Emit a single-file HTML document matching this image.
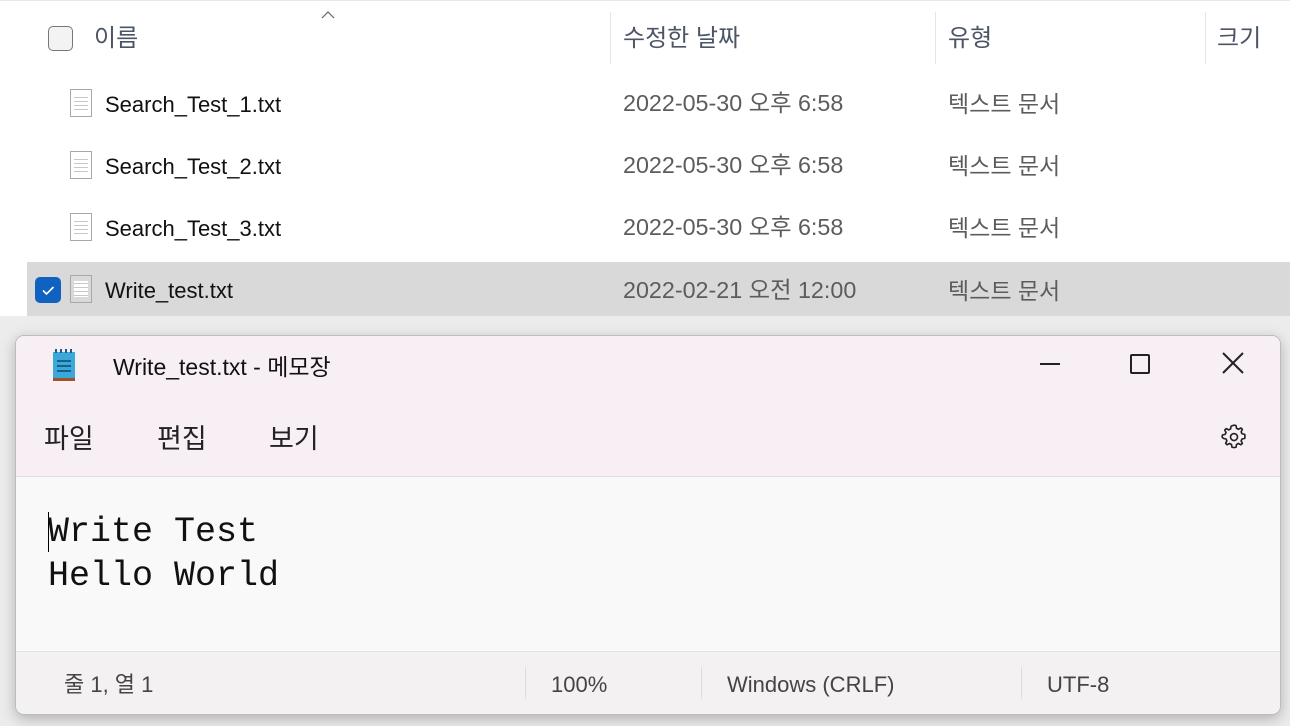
<!DOCTYPE html>
<html><head><meta charset="utf-8"><style>
*{margin:0;padding:0;box-sizing:border-box}
body{width:1290px;height:726px;overflow:hidden;background:#fff;font-family:"Liberation Sans","Noto Sans CJK KR",sans-serif;position:relative}
.a{position:absolute;white-space:nowrap;line-height:30px}
.hdr{font-size:24px;color:#4c5566;top:24px}
.name{font-size:22px;color:#111;left:105px}
.dt{font-size:23.3px;color:#5c5c5c;left:623px}
.ty{font-size:23px;color:#5c5c5c;left:948px}
.vl{position:absolute;top:12px;width:1px;height:52px;background:#e5e5e5}
.fi{position:absolute;left:70px;width:22px;height:28px;border:1px solid #a8a8a8;background:repeating-linear-gradient(#fff 0 3px,#c8c8c8 3px 4px);background-clip:content-box;padding:5px 3px}
#win{position:absolute;left:15px;top:335px;width:1266px;height:380px;border:1px solid #bdbdbd;border-radius:9px;overflow:hidden;box-shadow:0 4px 14px rgba(0,0,0,.25);background:#f9f9f9}
</style></head><body>
<div style="position:absolute;left:0;top:316px;width:1290px;height:410px;background:#ececec"></div>
<div style="position:absolute;left:0;top:0;width:1290px;height:1px;background:#e8e8e8"></div>
<svg class="a" style="left:321px;top:11px" width="14" height="8"><path d="M1 7L7 1L13 7" stroke="#666" fill="none" stroke-width="1.2"/></svg>
<div style="position:absolute;left:48px;top:26px;width:25px;height:25px;border:1.5px solid #777;border-radius:5px;background:#f3f3f3"></div>
<div class="a hdr" style="left:94px">이름</div>
<div class="vl" style="left:610px"></div>
<div class="a hdr" style="left:623px">수정한 날짜</div>
<div class="vl" style="left:935px"></div>
<div class="a hdr" style="left:948px">유형</div>
<div class="vl" style="left:1205px"></div>
<div class="a hdr" style="left:1217px">크기</div>

<div style="position:absolute;left:27px;top:262px;width:1263px;height:54px;background:#d9d9d9"></div>
<div class="fi" style="top:89px"></div><div class="a name" style="top:90px">Search_Test_1.txt</div>
<div class="a dt" style="top:88px">2022-05-30 오후 6:58</div><div class="a ty" style="top:89px">텍스트 문서</div>
<div class="fi" style="top:151px"></div><div class="a name" style="top:152px">Search_Test_2.txt</div>
<div class="a dt" style="top:150px">2022-05-30 오후 6:58</div><div class="a ty" style="top:151px">텍스트 문서</div>
<div class="fi" style="top:213px"></div><div class="a name" style="top:214px">Search_Test_3.txt</div>
<div class="a dt" style="top:212px">2022-05-30 오후 6:58</div><div class="a ty" style="top:213px">텍스트 문서</div>
<div style="position:absolute;left:35px;top:277px;width:26px;height:26px;border-radius:5px;background:#0f62c0"><svg width="26" height="26"><path d="M8 13.5l3.5 3.5 7-7" stroke="#fff" stroke-width="1.6" fill="none"/></svg></div>
<div class="fi" style="top:275px"></div><div class="a name" style="top:276px">Write_test.txt</div>
<div class="a dt" style="top:275px">2022-02-21 오전 12:00</div><div class="a ty" style="top:276px">텍스트 문서</div>

<div id="win">
<div style="position:absolute;left:0;top:0;width:100%;height:141px;background:#f8eff4;border-bottom:1px solid #e2dde0"></div>
<svg class="a" style="left:35px;top:12px" width="28" height="36"><rect x="2" y="4" width="22" height="26" fill="#3aa8d8"/><rect x="2" y="30" width="22" height="3" fill="#a0522d"/><g stroke="#1a5f8a" stroke-width="2"><line x1="6" y1="13" x2="20" y2="13"/><line x1="6" y1="18" x2="20" y2="18"/><line x1="6" y1="23" x2="20" y2="23"/></g><g fill="#1a5f8a"><rect x="4" y="1" width="2" height="4"/><rect x="9" y="1" width="2" height="4"/><rect x="14" y="1" width="2" height="4"/><rect x="19" y="1" width="2" height="4"/></g></svg>
<div class="a" style="left:97px;top:16px;font-size:23px;color:#111">Write_test.txt - 메모장</div>
<div style="position:absolute;left:1024px;top:27px;width:20px;height:2px;background:#222"></div>
<div style="position:absolute;left:1114px;top:18px;width:20px;height:20px;border:2px solid #222;border-radius:2px"></div>
<svg class="a" style="left:1206px;top:16px" width="22" height="22"><path d="M1 1L21 21M21 1L1 21" stroke="#222" stroke-width="2"/></svg>
<div class="a" style="left:28px;top:88px;font-size:27px;color:#222">파일</div>
<div class="a" style="left:141px;top:88px;font-size:27px;color:#222">편집</div>
<div class="a" style="left:253px;top:88px;font-size:27px;color:#222">보기</div>
<svg class="a" style="left:1203px;top:86px" width="30" height="30" viewBox="0 0 24 24"><path d="M12 2.5l1.6.3.4 2.2 1.5.8 2-1 1.2 1.1-1 2 .7 1.5 2.2.5.2 1.6-.2 1.6-2.2.5-.7 1.5 1 2-1.2 1.1-2-1-1.5.8-.4 2.2-1.6.3-1.6-.3-.4-2.2-1.5-.8-2 1-1.2-1.1 1-2-.7-1.5-2.2-.5L2.5 12l.2-1.6 2.2-.5.7-1.5-1-2L5.8 5.3l2 1 1.5-.8.4-2.2z" fill="none" stroke="#222" stroke-width="1.3" stroke-linejoin="round"/><circle cx="12" cy="12" r="2.8" fill="none" stroke="#222" stroke-width="1.3"/></svg>
<div style="position:absolute;left:32px;top:176px;width:1px;height:40px;background:#000"></div>
<div class="a" style="left:32px;top:174px;font-family:'Liberation Mono','DejaVu Sans Mono',monospace;font-size:35px;line-height:44px;color:#111">Write Test<br>Hello World</div>
<div style="position:absolute;left:0;top:315px;width:100%;height:65px;background:#f3f1f2;border-top:1px solid #e2e2e2"></div>
<div class="a" style="left:48px;top:334px;font-size:22px;color:#444">줄 1, 열 1</div>
<div style="position:absolute;left:509px;top:331px;width:1px;height:32px;background:#ddd"></div>
<div class="a" style="left:535px;top:334px;font-size:22px;color:#444">100%</div>
<div style="position:absolute;left:685px;top:331px;width:1px;height:32px;background:#ddd"></div>
<div class="a" style="left:711px;top:334px;font-size:22px;color:#444">Windows (CRLF)</div>
<div style="position:absolute;left:1005px;top:331px;width:1px;height:32px;background:#ddd"></div>
<div class="a" style="left:1031px;top:334px;font-size:22px;color:#444">UTF-8</div>
</div>
</body></html>
